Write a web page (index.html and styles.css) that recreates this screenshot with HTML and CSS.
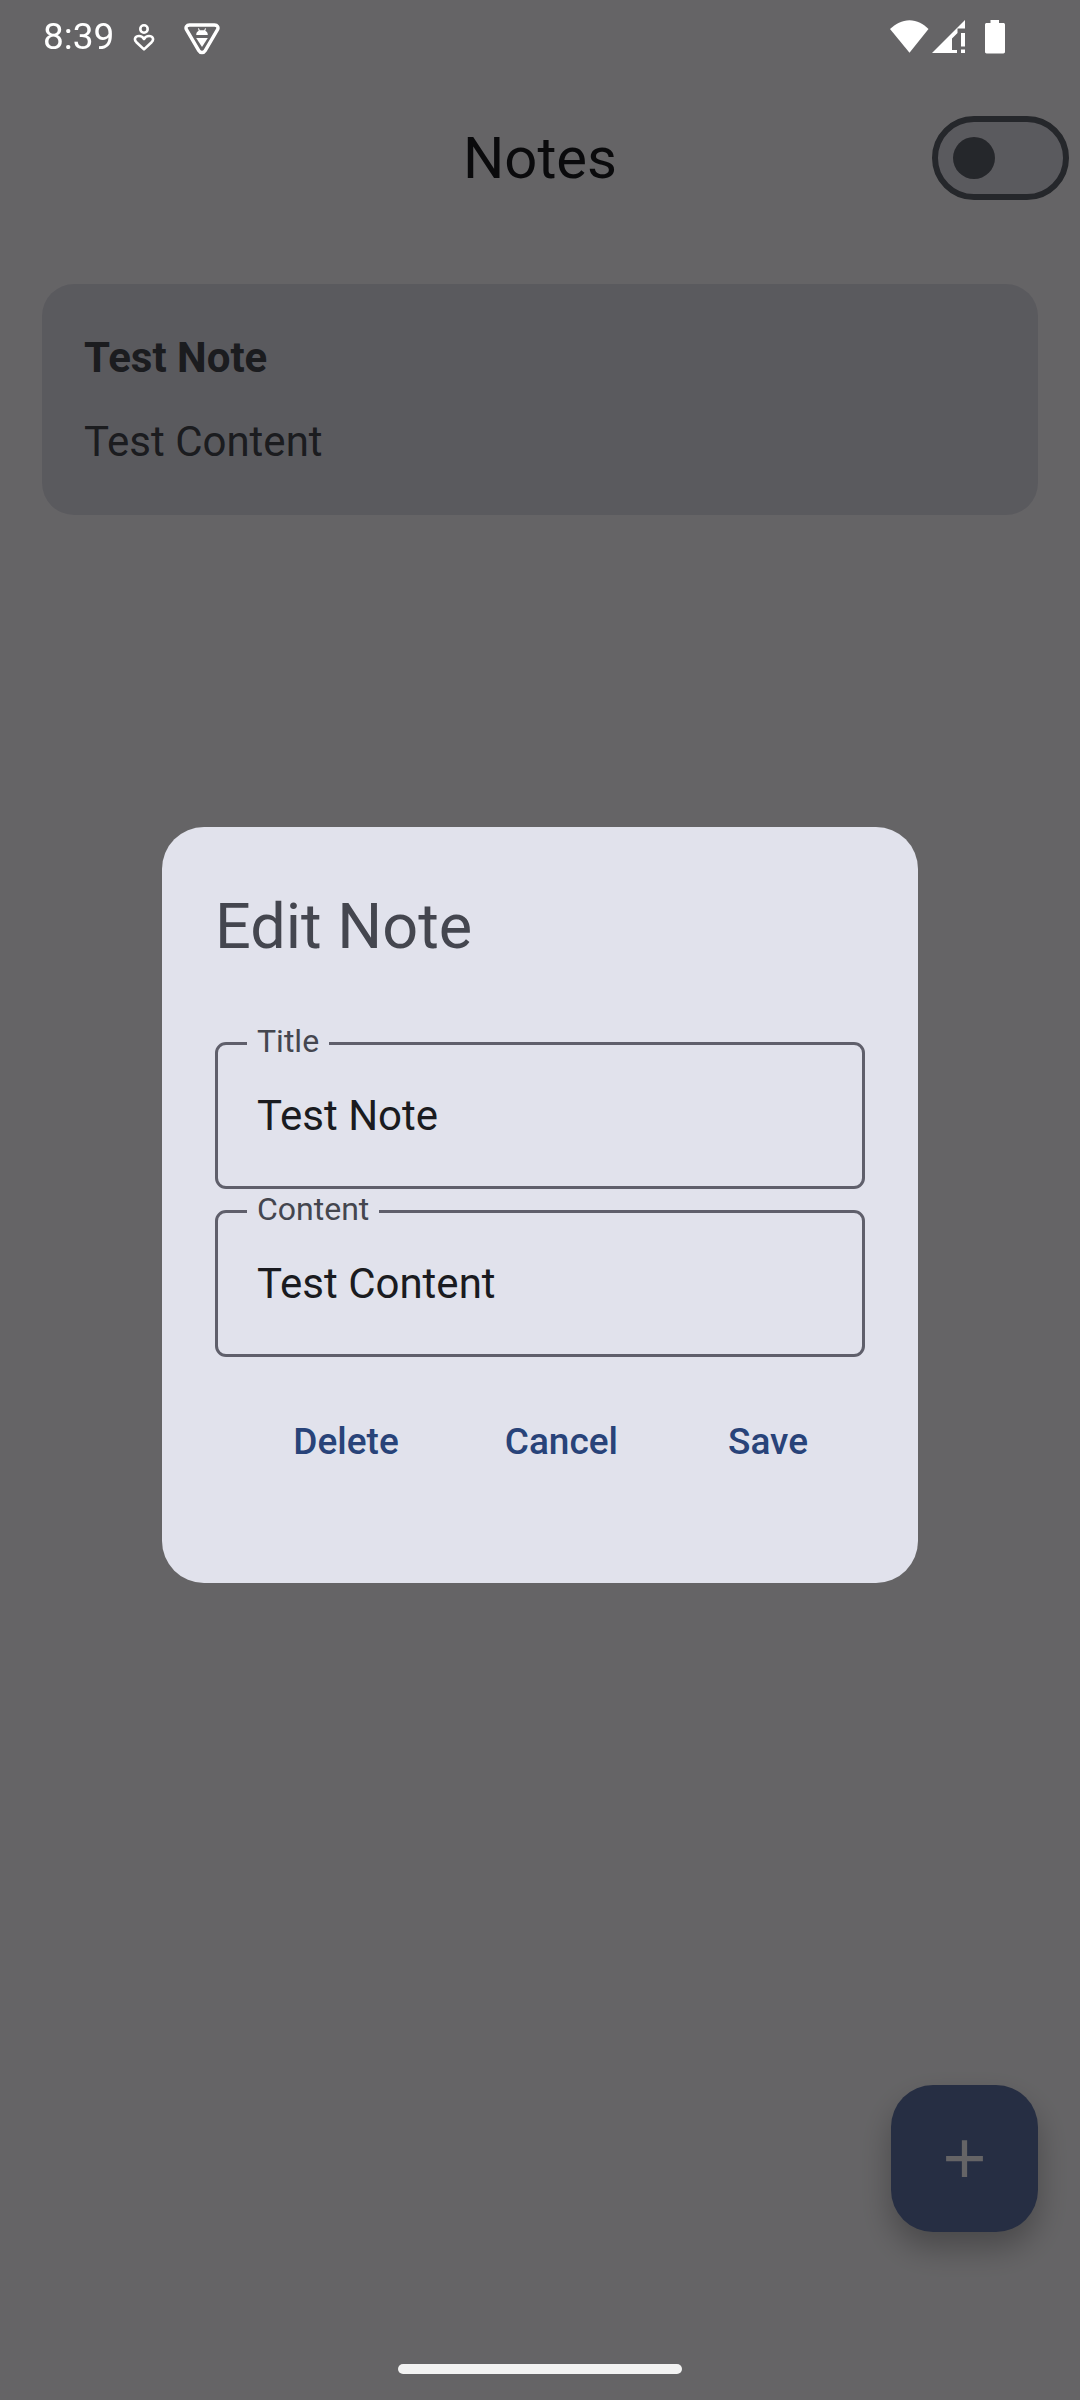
FILE: index.html
```html
<!DOCTYPE html>
<html lang="en">
<head>
<meta charset="utf-8">
<meta name="viewport" content="width=device-width, initial-scale=1">
<title>Notes</title>
<link rel="stylesheet" href="styles.css">
</head>
<body>
<div class="screen">
  <header class="app-bar">
    <h1 class="app-title">Notes</h1>
    <input class="theme-switch" type="checkbox" role="switch" aria-label="Dark theme">
  </header>
  <main class="notes">
    <article class="note">
      <h2 class="note-title">Test Note</h2>
      <p class="note-text">Test Content</p>
    </article>
  </main>
  <footer class="actions">
    <button class="fab" type="button" aria-label="Add note">
      <svg width="63" height="63" viewBox="0 0 24 24" aria-hidden="true"><path fill="currentColor" d="M19 13h-6v6h-2v-6H5v-2h6V5h2v6h6z"/></svg>
    </button>
  </footer>
</div>

<div class="scrim">
  <form class="dialog" role="dialog" aria-modal="true" aria-labelledby="dialog-title">
    <h2 class="dialog-title" id="dialog-title">Edit Note</h2>
    <div class="fields">
      <div class="field">
        <label class="field-label" for="title">Title</label>
        <input class="field-input" id="title" type="text" value="Test Note">
      </div>
      <div class="field">
        <label class="field-label" for="content">Content</label>
        <input class="field-input" id="content" type="text" value="Test Content">
      </div>
    </div>
    <div class="dialog-actions">
      <button class="text-button" type="button">Delete</button>
      <button class="text-button" type="button">Cancel</button>
      <button class="text-button" type="button">Save</button>
    </div>
  </form>
</div>

<div class="status-bar">
  <div class="status-left">
    <span class="clock">8:39</span>
    <svg width="22" height="40" viewBox="0 0 22 40" fill="none" stroke="#fff" stroke-width="2.6" aria-hidden="true">
      <circle cx="11" cy="12" r="3.7"/>
      <path stroke-linejoin="round" d="M11 32.400 3.400 25.200C.5 22.200 2.300 19 6 19c2.400 0 4 1.200 5 3 1-1.800 2.600-3 5-3 3.700 0 5.500 3.200 2.600 6.200z"/>
    </svg>
    <svg class="shield" width="36" height="40" viewBox="0 0 36 40" aria-hidden="true">
      <path fill="none" stroke="#fff" stroke-width="3.400" stroke-linejoin="round" d="M5.500 8h25c2.800 0 4.300 2.300 3 4.700L21.200 33.600c-1.500 2.600-4.900 2.600-6.400 0L2.500 12.700C1.200 10.300 2.700 8 5.500 8z"/>
      <path fill="#fff" d="M12.200 18c0-2.300 1-3.600 2.500-4.300L14 11.600l.9-.3.900 2h4.400l.9-2 .9.300-.7 2.100c1.500.7 2.500 2 2.500 4.300z"/>
      <path fill="#fff" d="M12.200 21h11.600L18 30z"/>
    </svg>
  </div>
  <div class="status-right">
    <svg width="40" height="40" viewBox="0 0 40 40" aria-hidden="true"><path fill="#fff" d="M20.500 35.800 1 12c5.500-5 12-8.800 19.500-8.800S34.500 7 39.500 12z"/></svg>
    <svg width="34" height="40" viewBox="0 0 34 40" aria-hidden="true"><path fill="#fff" d="M0 36 33 3v8.500h-7.500V16L20 21.500V33h5V36zM29 16h4v13.500h-4zM29 32.500h4V36h-4z"/></svg>
    <svg class="battery" width="20" height="40" viewBox="0 0 20 40" aria-hidden="true"><path fill="#fff" d="M5.500 3h8.500v3h4.300c1 0 1.700.7 1.700 1.700v27.100c0 1-.7 1.700-1.700 1.700H1.700c-1 0-1.700-.7-1.700-1.700V7.700C0 6.700.7 6 1.700 6h3.800z"/></svg>
  </div>
</div>
<div class="gesture-bar"></div>
</body>
</html>
```
FILE: styles.css
```css
* {
  box-sizing: border-box;
}

body {
  margin: 0;
  font-family: Roboto, "Liberation Sans", sans-serif;
  background: #fdfbff;
}

h1, h2, p {
  margin: 0;
}

button, input {
  margin: 0;
  font-family: inherit;
}

svg {
  display: block;
}

.screen {
  min-height: 100vh;
  display: flex;
  flex-direction: column;
  padding-top: 74px;
}

.app-bar {
  height: 168px;
  display: grid;
  grid-template-columns: 1fr auto 1fr;
  align-items: center;
  padding: 0 11px;
}

.app-title {
  grid-column: 2;
  font-size: 58px;
  line-height: 74px;
  font-weight: 400;
  color: #1a1b20;
}

.theme-switch {
  appearance: none;
  justify-self: end;
  display: flex;
  align-items: center;
  width: 137px;
  height: 84px;
  padding: 0 15px;
  border: 6px solid #5e616b;
  border-radius: 42px;
  background: #e2e1ec;
}

.theme-switch::before {
  content: "";
  width: 42px;
  height: 42px;
  border-radius: 50%;
  background: #5e616b;
}

.theme-switch:checked {
  justify-content: flex-end;
}

.notes {
  flex: 1;
  padding: 42px;
}

.note {
  display: flex;
  flex-direction: column;
  gap: 21px;
  padding: 42px;
  border-radius: 32px;
  background: #e2e1ec;
  color: #44464f;
}

.note-title,
.note-text {
  font-size: 42px;
  line-height: 63px;
}

.note-title {
  font-weight: 700;
}

.actions {
  display: flex;
  justify-content: flex-end;
  padding: 0 42px 168px;
}

.fab {
  display: flex;
  align-items: center;
  justify-content: center;
  width: 147px;
  height: 147px;
  padding: 0;
  border: 0;
  border-radius: 42px;
  background: #5f73a7;
  color: #fdfbff;
  box-shadow: 0 16px 32px rgba(0, 0, 0, 0.28);
}

.scrim {
  position: fixed;
  inset: 0;
  display: flex;
  align-items: center;
  justify-content: center;
  padding: 74px 0 64px;
  background: rgba(0, 0, 0, 0.6);
}

.dialog {
  width: 70%;
  padding: 58px 53px 89px;
  border-radius: 42px;
  background: #e1e2ec;
}

.dialog-title {
  font-size: 63px;
  line-height: 84px;
  font-weight: 400;
  color: #44464f;
}

.fields {
  display: flex;
  flex-direction: column;
  gap: 21px;
  margin-top: 73px;
}

.field {
  position: relative;
}

.field-label {
  position: absolute;
  top: -19px;
  left: 32px;
  padding: 0 10px;
  font-size: 32px;
  line-height: 36px;
  background: #e1e2ec;
  color: #44464f;
}

.field-input {
  display: block;
  width: 100%;
  height: 147px;
  padding: 0 39px;
  border: 3px solid #5f5f6b;
  border-radius: 11px;
  background: transparent;
  font-size: 42px;
  color: #1a1b20;
}

.dialog-actions {
  display: flex;
  justify-content: flex-end;
  gap: 42px;
  margin-top: 32px;
  padding-right: 21px;
}

.text-button {
  min-width: 152px;
  height: 105px;
  padding: 0 32px;
  border: 0;
  background: none;
  font-size: 37px;
  font-weight: 500;
  color: #284379;
}

.status-bar {
  position: fixed;
  inset: 0 0 auto;
  height: 74px;
  display: flex;
  align-items: center;
  justify-content: space-between;
  padding: 0 75px 0 43px;
  color: #fff;
}

.status-left,
.status-right {
  display: flex;
  align-items: center;
}

.clock {
  margin-right: 19px;
  font-size: 37px;
  line-height: 42px;
}

.shield {
  margin-left: 29px;
}

.status-right {
  gap: 3px;
}

.battery {
  margin-left: 16px;
}

.gesture-bar {
  position: fixed;
  bottom: 26px;
  left: 50%;
  width: 284px;
  height: 10px;
  margin-left: -142px;
  border-radius: 5px;
  background: #f2f2f2;
}
```
